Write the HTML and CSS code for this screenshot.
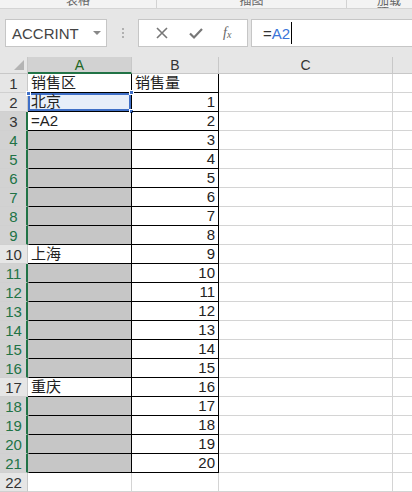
FILE: index.html
```html
<!DOCTYPE html>
<html>
<head>
<meta charset="utf-8">
<link rel="stylesheet" href="styles.css">
</head>
<body>
<div class="ribbon">
  <div class="rgroup g1"><span>表格</span></div>
  <div class="rgroup g2"><span>插图</span></div>
  <div class="rgroup g3"><span>加载项</span></div>
</div>
<div class="fbar">
  <div class="namebox"><span class="nametext">ACCRINT</span><span class="caret"></span></div>
  <div class="grip"><i></i><i></i><i></i></div>
  <div class="fbtns">
    <svg class="ico" width="14" height="14" viewBox="0 0 14 14"><path d="M2 2L12 12M12 2L2 12" stroke="#777" stroke-width="1.6" fill="none"/></svg>
    <svg class="ico" width="16" height="14" viewBox="0 0 16 14"><path d="M2 7.5L6 11.5L14 3" stroke="#777" stroke-width="2.2" fill="none"/></svg>
    <span class="fx">f<sub>x</sub></span>
  </div>
  <div class="finput"><span class="eq">=</span><span class="ref">A2</span><span class="cursor"></span></div>
</div>
<div class="sheet">
  <div class="corner"><span class="tri"></span></div>
  <div class="ch cha">A</div>
  <div class="ch">B</div>
  <div class="ch">C</div>
  <div class="ch chd"></div>

  <div class="rh">1</div><div class="c t">销售区</div><div class="c t">销售量</div><div class="c"></div><div class="c d"></div>
  <div class="rh">2</div><div class="c t copy">北京<i class="h h1"></i><i class="h h2"></i><i class="h h3"></i></div><div class="c t n">1</div><div class="c"></div><div class="c d"></div>
  <div class="rh sel plain">3</div><div class="c t">=A2</div><div class="c t n">2</div><div class="c"></div><div class="c d"></div>
  <div class="rh sel">4</div><div class="c t g"></div><div class="c t n">3</div><div class="c"></div><div class="c d"></div>
  <div class="rh sel">5</div><div class="c t g"></div><div class="c t n">4</div><div class="c"></div><div class="c d"></div>
  <div class="rh sel">6</div><div class="c t g"></div><div class="c t n">5</div><div class="c"></div><div class="c d"></div>
  <div class="rh sel">7</div><div class="c t g"></div><div class="c t n">6</div><div class="c"></div><div class="c d"></div>
  <div class="rh sel">8</div><div class="c t g"></div><div class="c t n">7</div><div class="c"></div><div class="c d"></div>
  <div class="rh sel">9</div><div class="c t g"></div><div class="c t n">8</div><div class="c"></div><div class="c d"></div>
  <div class="rh">10</div><div class="c t">上海</div><div class="c t n">9</div><div class="c"></div><div class="c d"></div>
  <div class="rh sel">11</div><div class="c t g"></div><div class="c t n">10</div><div class="c"></div><div class="c d"></div>
  <div class="rh sel">12</div><div class="c t g"></div><div class="c t n">11</div><div class="c"></div><div class="c d"></div>
  <div class="rh sel">13</div><div class="c t g"></div><div class="c t n">12</div><div class="c"></div><div class="c d"></div>
  <div class="rh sel">14</div><div class="c t g"></div><div class="c t n">13</div><div class="c"></div><div class="c d"></div>
  <div class="rh sel">15</div><div class="c t g"></div><div class="c t n">14</div><div class="c"></div><div class="c d"></div>
  <div class="rh sel">16</div><div class="c t g"></div><div class="c t n">15</div><div class="c"></div><div class="c d"></div>
  <div class="rh">17</div><div class="c t">重庆</div><div class="c t n">16</div><div class="c"></div><div class="c d"></div>
  <div class="rh sel">18</div><div class="c t g"></div><div class="c t n">17</div><div class="c"></div><div class="c d"></div>
  <div class="rh sel">19</div><div class="c t g"></div><div class="c t n">18</div><div class="c"></div><div class="c d"></div>
  <div class="rh sel">20</div><div class="c t g"></div><div class="c t n">19</div><div class="c"></div><div class="c d"></div>
  <div class="rh sel">21</div><div class="c t g"></div><div class="c t n">20</div><div class="c"></div><div class="c d"></div>
  <div class="rh">22</div><div class="c"></div><div class="c"></div><div class="c"></div><div class="c d"></div>
</div>
</body>
</html>
```
FILE: styles.css
```css
* { box-sizing: border-box; }
html, body { margin: 0; padding: 0; }
body {
  width: 412px;
  height: 492px;
  overflow: hidden;
  background: #fff;
  font-family: "Liberation Sans", "Noto Sans CJK SC", sans-serif;
  color: #222;
}

/* ribbon strip */
.ribbon {
  height: 9px;
  display: flex;
  background: #f3f3f3;
  border-bottom: 1px solid #d4d4d4;
  overflow: hidden;
}
.rgroup {
  display: flex;
  justify-content: center;
  overflow: hidden;
  border-right: 1px solid #d2d2d2;
}
.rgroup span {
  font-size: 12px;
  line-height: 12px;
  margin-top: -6px;
  color: #666;
  font-family: "Noto Sans CJK SC", sans-serif;
}
.g1 { width: 157px; }
.g2 { width: 190px; }
.g3 { flex: 1; border-right: 0; padding-left: 30px; }

/* formula bar */
.fbar {
  height: 48px;
  background: #e6e6e6;
  display: flex;
  align-items: flex-start;
  padding-top: 10px;
}
.namebox {
  margin-left: 5px;
  width: 102px;
  height: 28px;
  background: #fff;
  border: 1px solid #c6c6c6;
  display: flex;
  align-items: center;
  padding-left: 6px;
}
.nametext {
  font-size: 15px;
  color: #444;
  flex: 1;
}
.caret {
  width: 0; height: 0;
  border-left: 4px solid transparent;
  border-right: 4px solid transparent;
  border-top: 4px solid #888;
  margin-right: 5px;
}
.grip {
  width: 31px;
  height: 28px;
  display: flex;
  flex-direction: column;
  align-items: center;
  justify-content: center;
  gap: 2px;
}
.grip i {
  width: 2px; height: 2px;
  background: #b0b0b0;
  display: block;
}
.fbtns {
  width: 110px;
  height: 28px;
  background: #fff;
  border: 1px solid #c6c6c6;
  display: flex;
  align-items: center;
  justify-content: space-around;
  padding: 0 6px 0 6px;
}
.fx {
  font-family: "Liberation Serif", serif;
  font-style: italic;
  font-size: 14px;
  color: #666;
}
.fx sub { font-size: 10px; vertical-align: -1px; }
.finput {
  margin-left: 3px;
  flex: 1;
  height: 28px;
  background: #fff;
  border: 1px solid #c6c6c6;
  border-right: 0;
  display: flex;
  align-items: center;
  padding-left: 11px;
  font-size: 15px;
}
.eq { color: #333; }
.ref { color: #3a74d8; }
.cursor {
  width: 1px;
  height: 22px;
  background: #000;
  margin-left: 1px;
}

/* sheet */
.sheet {
  display: grid;
  grid-template-columns: 28px 104px 87px 174px 1fr;
  grid-template-rows: 17px repeat(22, 19px);
  font-size: 15px;
}
.corner {
  background: #e6e6e6;
  border-right: 1px solid #c8c8c8;
  border-bottom: 1px solid #c8c8c8;
  position: relative;
}
.tri {
  position: absolute;
  right: 3px;
  bottom: 3px;
  width: 0; height: 0;
  border-left: 10px solid transparent;
  border-bottom: 10px solid #b4b4b4;
}
.ch {
  background: #e6e6e6;
  border-right: 1px solid #c8c8c8;
  border-bottom: 1px solid #c8c8c8;
  display: flex;
  align-items: center;
  justify-content: center;
  font-size: 14px;
  color: #333;
}
.cha {
  background: #d2d2d2;
  border-bottom: 2px solid #217346;
  color: #262;
}
.chd { border-right: 0; }
.rh {
  background: #e6e6e6;
  border-right: 1px solid #c8c8c8;
  border-bottom: 1px solid #d0d0d0;
  display: flex;
  align-items: flex-end;
  justify-content: center;
  font-size: 15px;
  line-height: 17px;
  color: #333;
}
.rh.sel {
  background: #d2d2d2;
  border-right: 2px solid #217346;
  color: #217346;
  padding-left: 1px;
}
.rh.sel.plain { color: #333; }
.c {
  border-right: 1px solid #d4d4d4;
  border-bottom: 1px solid #d4d4d4;
  display: flex;
  align-items: flex-end;
  padding: 0 3px 0 3px;
  line-height: 18px;
  white-space: nowrap;
  position: relative;
}
.c.d { border-right: 0; }
.c.t {
  border-right: 1px solid #000;
  border-bottom: 1px solid #000;
}
.c.n { justify-content: flex-end; }
.c.g { background: #c6c6c6; border-left: 1px solid #c6c6c6; }

/* copy / reference highlight on A2 */
.copy {
  background: #e7eef9;
  box-shadow: inset 0 0 0 2px #3f6fc7;
  padding-left: 3px;
}
.h {
  position: absolute;
  width: 5px;
  height: 5px;
  background: #3f6fc7;
  border: 1px solid #fff;
}
.h1 { left: -2px; top: -2px; }
.h2 { right: -3px; top: -3px; }
.h3 { right: -3px; bottom: -3px; }
```
